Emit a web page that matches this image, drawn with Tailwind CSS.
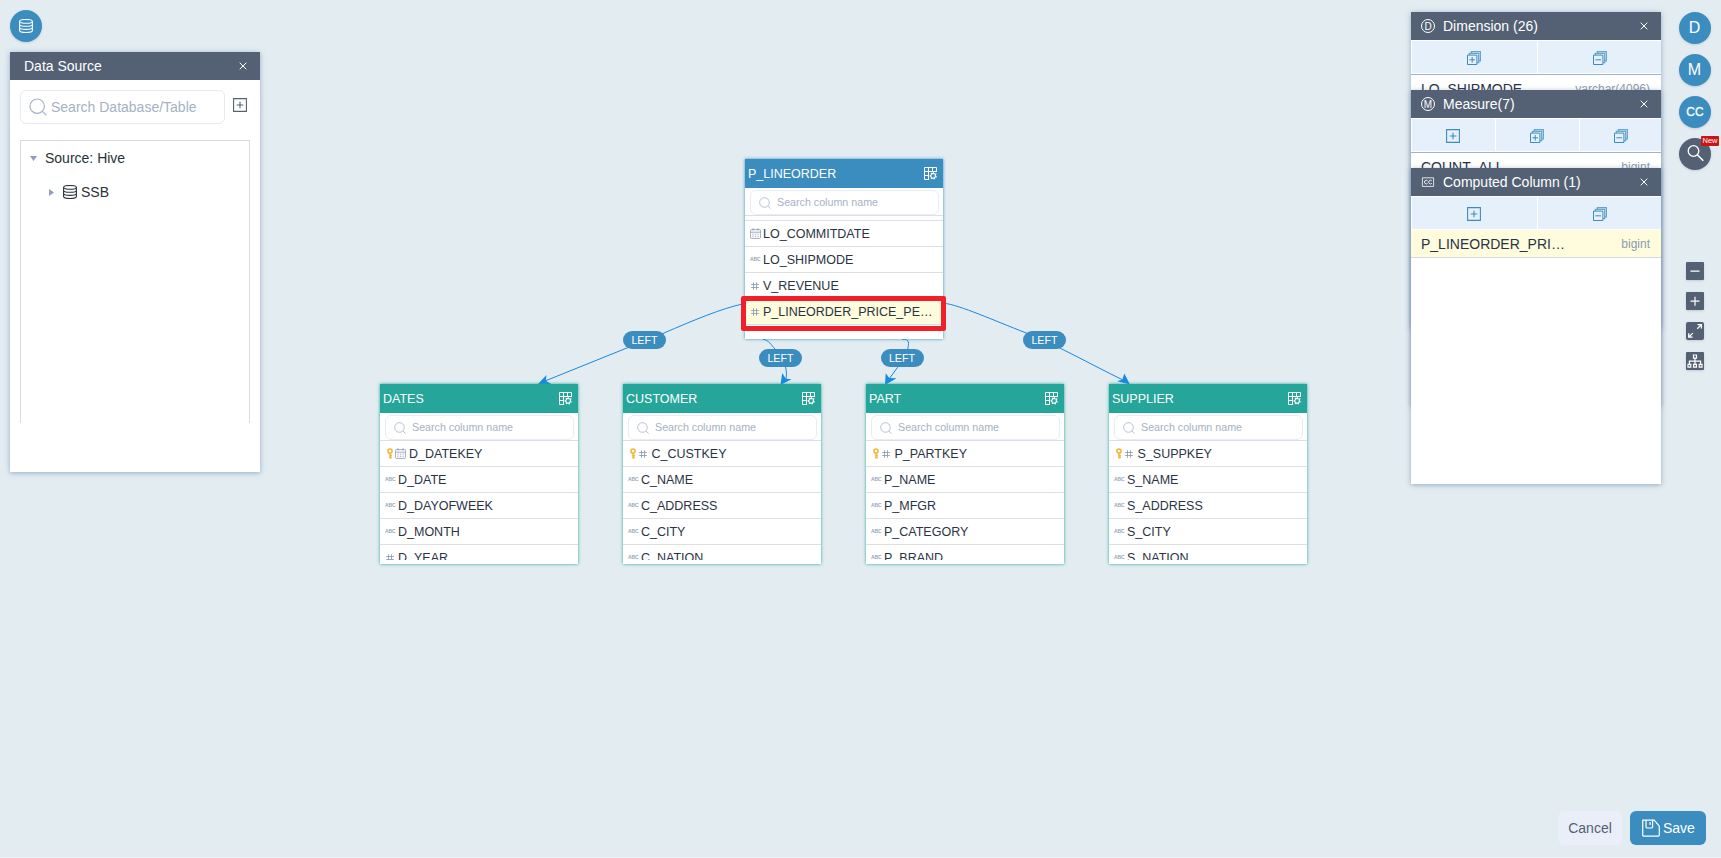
<!DOCTYPE html>
<html lang="en">
<head>
<meta charset="utf-8">
<title>Model editor</title>
<script src="https://cdn.jsdelivr.net/npm/@tailwindcss/browser@4"></script>
</head>
<body class="relative h-[858px] w-[1721px] overflow-hidden bg-[#e2ecf1] font-['Liberation_Sans',Arial,sans-serif] text-sm text-[#263238]">

<svg class="hidden">
  <symbol id="db" viewBox="0 0 14 14"><g fill="none" stroke="currentColor" stroke-width="1.100"><ellipse cx="7" cy="2.4" rx="6.4" ry="1.9"/><path d="M.6 2.4v9.2c0 1 2.800 1.900 6.400 1.900s6.400-.9 6.400-1.900V2.400M.6 5.400c0 1 2.800 1.900 6.400 1.900s6.400-.9 6.400-1.900M.6 8.500c0 1 2.800 1.900 6.400 1.900s6.400-.9 6.400-1.900"/></g></symbol>
  <symbol id="search" viewBox="0 0 18 18"><g fill="none" stroke="currentColor" stroke-width="1.2"><circle cx="8.2" cy="8.2" r="7.2"/><path d="M13.4 13.4l4 4"/></g></symbol>
  <symbol id="close" viewBox="0 0 8 8"><path d="M.7.7l6.6 6.6M7.3.7L.7 7.3" fill="none" stroke="currentColor" stroke-width="1"/></symbol>
  <symbol id="plus" viewBox="0 0 14 14"><path d="M.6.6h12.8v12.8H.6zM7 3.7v6.6M3.7 7h6.6" fill="none" stroke="currentColor" stroke-width="1.1"/></symbol>
  <symbol id="plusall" viewBox="0 0 14 14"><path d="M.5 4.1h9.4v9.4H.5zM5.2 6v5.6M2.4 8.8H8" fill="none" stroke="currentColor" stroke-width="1"/><path d="M2.4 4V2.300h9.300v9.300H10M4.400 2.300V.5h9.100v9.400h-1.800" fill="none" stroke="currentColor" stroke-width="1.300" stroke-opacity=".75"/></symbol>
  <symbol id="minusall" viewBox="0 0 14 14"><path d="M.5 4.1h9.4v9.4H.5zM2.4 8.8H8" fill="none" stroke="currentColor" stroke-width="1"/><path d="M2.4 4V2.300h9.300v9.300H10M4.400 2.300V.5h9.100v9.400h-1.800" fill="none" stroke="currentColor" stroke-width="1.300" stroke-opacity=".75"/></symbol>
  <symbol id="tableset" viewBox="0 0 13 13"><g fill="none" stroke="currentColor" stroke-width="1"><path d="M12.500 5V.5H.5v12h4.600M.5 4.500h12M.5 8.500h4.600M4.500.5v12M8.500.5v4"/><path d="M9.300 5.700l.9 1.300 1.600-.1-.6 1.700 1 1.300-1.600.4-.4 1.500-1.300-.9-1.500.6-.1-1.600-1.200-1 1.200-1 .1-1.500 1.500.2z" stroke-width="1.100"/></g></symbol>
  <symbol id="cal" viewBox="0 0 11 11"><g fill="none" stroke="currentColor" stroke-width=".8"><path d="M1.4 1.6h8.2q1 0 1 1v6.8q0 1-1 1H1.4q-1 0-1-1V2.6q0-1 1-1zM.4 4.2h10.2M3 .2v2.4M8 .2v2.4"/><path d="M2.3 6.2h6.6M2.3 8.3h6.6" stroke-dasharray="1.3 1.3"/></g></symbol>
  <symbol id="hash" viewBox="0 0 8 8"><path d="M2.5.2v7.6M5.5.2v7.6M.1 2.5h7.8M.1 5.5h7.8" fill="none" stroke="currentColor" stroke-width=".8"/></symbol>
  <symbol id="key" viewBox="0 0 6 11"><path d="M3 1a2.1 2.1 0 1 1 0 4.2A2.1 2.1 0 0 1 3 1zM3 5v5.6M3.2 7.6h1.7M3.2 9.6h1.7" fill="none" stroke="currentColor" stroke-width="1.5"/></symbol>
</svg>

<!-- join links -->
<svg class="absolute inset-0 text-[#1789e0]" width="1721" height="858" fill="none" stroke="currentColor" stroke-width="1">
  <path d="M745 303.500C722 308 692 321 664 333L545 381"/>
  <path d="M763 339.300C769 340 771 345 775 349S789 366 786 379"/>
  <path d="M902 339.300C910 339 909 343 907.500 350L897.500 367.500 889 379"/>
  <path d="M943 303C960 305 995 321 1025 332.500S1090 364 1123 380"/>
  <g fill="currentColor" stroke="none">
    <path d="M537 385l9.500-10-.7 5.800 6 3.500z"/>
    <path d="M780.500 385l1.700-12 3.600 5.700 5.700.5z"/>
    <path d="M885 385l.7-11.800 3.600 4.700 7.200.3z"/>
    <path d="M1130 384.500l-5.700-11-1.900 5.900-5.300 1.800z"/>
  </g>
</svg>
<div id="canvas"></div>
<div class="absolute left-[741px] top-[296px] h-[35px] w-[205px] rounded-[2px] border-5 border-[#f0202a]"></div>

<!-- data source -->
<button class="absolute left-2.5 top-2.5 grid size-8 place-items-center rounded-full bg-[#3b8dbf] text-white shadow-sm"><svg class="size-3.5"><use href="#db"/></svg></button>
<section class="absolute left-2.5 top-[52px] h-[420px] w-[250px] bg-white shadow-[0_1px_5px_rgba(80,110,150,.5)]">
  <header class="flex h-7 items-center justify-between bg-[#546174] pl-3.5 pr-[13px] text-white"><span>Data Source</span><svg class="size-2"><use href="#close"/></svg></header>
  <div class="flex gap-2 px-2.5 pt-2.5">
    <div class="flex h-[34px] w-[205px] items-center rounded-md border border-[#e6eaf5] pl-2 text-[#a5b2c5]"><svg class="mr-1 size-[18px]"><use href="#search"/></svg>Search Database/Table</div>
    <svg class="mt-2 size-3.5 text-[#546174]"><use href="#plus"/></svg>
  </div>
  <div class="mx-2.5 mt-4 h-[283px] border border-b-0 border-[#d9dbdd]">
    <div class="flex h-[34px] items-center pl-[9px]"><svg class="mr-2 mt-px h-[5px] w-[7px]" viewBox="0 0 7 5"><path d="M0 0h7L3.500 5z" fill="#8f9fba"/></svg>Source: Hive</div>
    <div class="flex h-[34px] items-center pl-[28px]"><svg class="mr-[9px] h-[7px] w-[5px]" viewBox="0 0 5 7"><path d="M0 0v7L5 3.500z" fill="#8f9fba"/></svg><svg class="mr-1 size-3.5"><use href="#db"/></svg>SSB</div>
  </div>
</section>

<!-- model panels -->
<section class="absolute left-[1411px] top-3 h-[316px] w-[250px] bg-white shadow-[0_1px_5px_rgba(80,110,150,.5)]">
  <header class="flex h-7 items-center bg-[#546174] pl-2.5 pr-[13px] text-white"><svg class="mr-2 size-3.5" viewBox="0 0 14 14"><circle cx="7" cy="7" r="6.500" fill="none" stroke="#fff"/><text x="7.200" y="10.500" text-anchor="middle" font-size="10" fill="#fff">D</text></svg><span class="flex-1">Dimension (26)</span><svg class="size-2"><use href="#close"/></svg></header>
  <div class="grid h-[35px] grid-cols-[125px_1fr] gap-px border-b border-[#a0b2c8] pb-px pl-px pt-px text-[#3b8dbf]">
    <div class="grid place-items-center bg-[#e6f0fb]"><svg class="mr-px mt-0.5 size-3.5"><use href="#plusall"/></svg></div>
    <div class="grid place-items-center bg-[#e6f0fb]"><svg class="mt-0.5 size-3.5"><use href="#minusall"/></svg></div>
  </div>
  <div class="flex h-[27px] items-center justify-between pl-2.5 pr-[11px] text-[#2a3344]"><span>LO_SHIPMODE</span><span class="text-xs text-[#8c9bb2]">varchar(4096)</span></div>
</section>
<section class="absolute left-[1411px] top-[90px] h-[316px] w-[250px] bg-white shadow-[0_1px_5px_rgba(80,110,150,.5)]">
  <header class="flex h-7 items-center bg-[#546174] pl-2.5 pr-[13px] text-white"><svg class="mr-2 size-3.5" viewBox="0 0 14 14"><circle cx="7" cy="7" r="6.500" fill="none" stroke="#fff"/><text x="7" y="10.500" text-anchor="middle" font-size="10" fill="#fff">M</text></svg><span class="flex-1">Measure(7)</span><svg class="size-2"><use href="#close"/></svg></header>
  <div class="grid h-[35px] grid-cols-[83px_83px_1fr] gap-px border-b border-[#a0b2c8] pb-px pl-px pt-px text-[#3b8dbf]">
    <div class="grid place-items-center bg-[#e6f0fb]"><svg class="mr-px mt-0.5 size-3.5"><use href="#plus"/></svg></div>
    <div class="grid place-items-center bg-[#e6f0fb]"><svg class="mr-px mt-0.5 size-3.5"><use href="#plusall"/></svg></div>
    <div class="grid place-items-center bg-[#e6f0fb]"><svg class="mt-0.5 size-3.5"><use href="#minusall"/></svg></div>
  </div>
  <div class="flex h-[27px] items-center justify-between pl-2.5 pr-[11px] text-[#2a3344]"><span>COUNT_ALL</span><span class="text-xs text-[#8c9bb2]">bigint</span></div>
</section>
<section class="absolute left-[1411px] top-[168px] h-[316px] w-[250px] bg-white shadow-[0_1px_5px_rgba(80,110,150,.5)]">
  <header class="flex h-7 items-center bg-[#546174] pl-2.5 pr-[13px] text-white"><svg class="mr-2 size-3.5" viewBox="0 0 14 14"><path d="M1.400 2.800h11.200v8.600H1.400z" fill="none" stroke="#fff" stroke-width=".8"/><path d="M6.600 5.900a1.800 1.800 0 1 0 0 2.400M10.800 5.900a1.800 1.800 0 1 0 0 2.400" fill="none" stroke="#fff" stroke-width=".9"/></svg><span class="flex-1">Computed Column (1)</span><svg class="size-2"><use href="#close"/></svg></header>
  <div class="grid h-[34px] grid-cols-[125px_1fr] gap-px pb-px pl-px pt-px text-[#3b8dbf]">
    <div class="grid place-items-center bg-[#e6f0fb]"><svg class="mr-px mt-0.5 size-3.5"><use href="#plus"/></svg></div>
    <div class="grid place-items-center bg-[#e6f0fb]"><svg class="mt-0.5 size-3.5"><use href="#minusall"/></svg></div>
  </div>
  <div class="flex h-7 items-center justify-between border-b border-[#d5d8dc] bg-[#fffbdd] pl-2.5 pr-[11px] text-[#2a3344]"><span>P_LINEORDER_PRI…</span><span class="text-xs text-[#8c9bb2]">bigint</span></div>
</section>

<!-- right toolbar -->
<nav class="absolute left-[1679px] top-3 flex w-8 flex-col items-center gap-2.5 text-base text-white">
  <button class="size-8 rounded-full bg-[#3b8dbf] pr-px shadow-sm">D</button>
  <button class="size-8 rounded-full bg-[#3b8dbf] pr-px shadow-sm">M</button>
  <button class="size-8 rounded-full bg-[#3b8dbf] text-xs shadow-sm [-webkit-text-stroke:0.3px_white]">CC</button>
  <button class="relative grid size-8 place-items-center rounded-full bg-[#546174] shadow-sm"><svg class="mb-0.5 size-[17px]" viewBox="0 0 17 17"><g fill="none" stroke="#fff" stroke-width="1.300"><circle cx="6.500" cy="6" r="5.300"/><path d="M10.300 9.800l6 6" stroke-width="1.600"/></g></svg>
    <span class="absolute -top-[2px] left-[22px] h-2.5 w-[18px] rounded-[1px] bg-[#cc1414] text-center text-[7.500px] leading-[10px]">New</span></button>
</nav>
<nav class="absolute left-[1686px] top-[262px] flex w-[18px] flex-col gap-3 text-white">
  <svg class="size-[18px] rounded-[1px] bg-[#546174] shadow-sm" viewBox="0 0 18 18"><path d="M4.500 9.200h9" stroke="#fff" stroke-width="1.200"/></svg>
  <svg class="size-[18px] rounded-[1px] bg-[#546174] shadow-sm" viewBox="0 0 18 18"><path d="M4.500 9.200h9M9 4.700v9" stroke="#fff" stroke-width="1.200"/></svg>
  <svg class="size-[18px] rounded-[2px] bg-[#546174] shadow-sm" viewBox="0 0 18 18"><path d="M11.500 2.700h3.900v3.900M15.200 2.900l-3.900 3.900M2.700 11.300v3.900h3.900M2.900 15l3.900-3.900" fill="none" stroke="#fff" stroke-width="1.300"/></svg>
  <svg class="size-[18px] rounded-[1px] bg-[#546174] shadow-sm" viewBox="0 0 18 18"><path d="M7.500 3h3v3.200h-3zM9 6.200v5.600M3.400 11.800V9.100h11.200v2.700M2 12.300h2.800v2.900H2zM7.600 12.300h2.800v2.900H7.600zM13.200 12.300H16v2.900h-2.800z" fill="none" stroke="#fff" stroke-width="1.200"/></svg>
</nav>

<!-- footer actions -->
<footer class="absolute left-[1558px] top-[811px] flex gap-2">
  <button class="h-[34px] w-16 rounded-md bg-[#e9eef8] text-[#546174]">Cancel</button>
  <button class="flex h-[34px] w-[76px] items-center rounded-md bg-[#3b8dbf] pl-3 text-white"><svg class="mr-[3px] size-[18px]" viewBox="0 0 18 18"><path d="M.7 1.200h11.500l5.100 6v8.900q0 1-1 1H1.700q-1 0-1-1zM4 1.200v6.500q0 1.300 1.300 1.300h4q1.300 0 1.300-1.300V1.200M8.100 3v3" fill="none" stroke="#fff" stroke-width="1.200"/></svg>Save</button>
</footer>
<div class="absolute bottom-0 left-0 h-px w-full bg-[#eef3f6]"></div>

<script>
const ICON = {
  abc: '<span class="mr-[2px] w-[11px] text-[5px] font-bold leading-none tracking-[-0.1px] text-[#9aa7bb]">ABC</span>',
  num: '<svg class="ml-px mr-1 size-2 text-[#8795ad]"><use href="#hash"/></svg>',
  date: '<svg class="mr-[2px] size-[11px] text-[#8795ad]"><use href="#cal"/></svg>',
  keynum: '<svg class="ml-[1.5px] mr-[3px] h-[11px] w-1.5 text-[#f5b32e]"><use href="#key"/></svg><svg class="mr-[5px] size-2 text-[#8795ad]"><use href="#hash"/></svg>',
  keydate: '<svg class="ml-[1.5px] mr-[2.5px] h-[11px] w-1.5 text-[#f5b32e]"><use href="#key"/></svg><svg class="mr-[3px] size-[11px] text-[#8795ad]"><use href="#cal"/></svg>'
};
const nodes = [
  {x:745, y:159, t:'P_LINEORDER', fact:1, rows:[['date','LO_COMMITDATE'],['abc','LO_SHIPMODE'],['num','V_REVENUE'],['num','P_LINEORDER_PRICE_PE…']]},
  {x:380, y:384, t:'DATES', rows:[['keydate','D_DATEKEY'],['abc','D_DATE'],['abc','D_DAYOFWEEK'],['abc','D_MONTH'],['num','D_YEAR']]},
  {x:623, y:384, t:'CUSTOMER', rows:[['keynum','C_CUSTKEY'],['abc','C_NAME'],['abc','C_ADDRESS'],['abc','C_CITY'],['abc','C_NATION']]},
  {x:866, y:384, t:'PART', rows:[['keynum','P_PARTKEY'],['abc','P_NAME'],['abc','P_MFGR'],['abc','P_CATEGORY'],['abc','P_BRAND']]},
  {x:1109, y:384, t:'SUPPLIER', rows:[['keynum','S_SUPPKEY'],['abc','S_NAME'],['abc','S_ADDRESS'],['abc','S_CITY'],['abc','S_NATION']]}
];
const pills = [[623,331],[759,349],[880.5,349],[1023,331]];
document.getElementById('canvas').innerHTML = nodes.map(n => `
  <section class="absolute h-[180px] w-[198px] bg-white text-[12.5px] ${n.fact ? 'shadow-[0_0_3px_#3b8dbf]' : 'shadow-[0_0_3px_#26a69a]'}" style="left:${n.x}px;top:${n.y}px">
    <header class="flex h-[29px] items-center justify-between pl-[3px] pr-1.5 text-white ${n.fact ? 'bg-[#3b8dbf]' : 'bg-[#26a69a]'}"><span class="pt-0.5">${n.t}</span><svg class="size-[13px]"><use href="#tableset"/></svg></header>
    <div class="h-[27px] px-[5px] pt-0.5"><div class="flex h-[25px] w-[189px] items-center rounded-md border border-[#e8ecf6] pl-2 text-[10.7px] text-[#a5b2c5]"><svg class="mr-1.5 size-3"><use href="#search"/></svg>Search column name</div></div>
    <div class="h-[120px] overflow-hidden border-t border-[#dddfe2] ${n.fact ? 'pt-1' : ''}">
    ${n.rows.map((r, i) => `<div class="flex items-center whitespace-nowrap pl-[5px] text-[#2a3344] ${i === 0 && !n.fact ? 'h-[25px]' : 'border-t border-[#dddfe2]'} ${n.fact && i === 3 ? 'h-[27px] border-b bg-[#fffbdd]' : ''} ${i > 0 && i !== 3 || n.fact && i === 0 || !n.fact && i === 3 ? 'h-[26px]' : ''}">${ICON[r[0]]}<span class="pt-0.5">${r[1]}</span></div>`).join('')}
    </div>
  </section>`).join('') + pills.map(p => `<div class="absolute grid h-[18px] w-[43px] place-items-center rounded-full bg-[#3b8dbf] text-[10.7px] leading-none text-white" style="left:${p[0]}px;top:${p[1]}px">LEFT</div>`).join('');
</script>
</body>
</html>
